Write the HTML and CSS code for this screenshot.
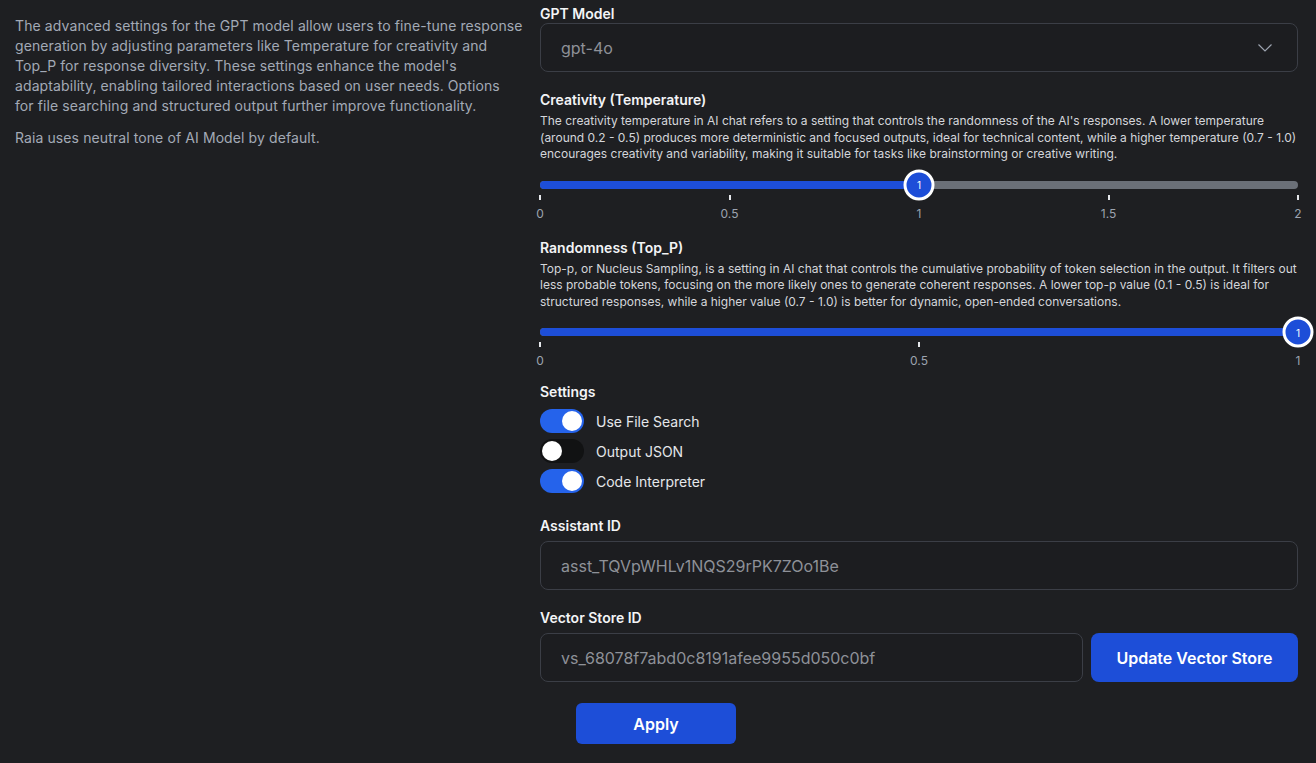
FILE: index.html
```html
<!DOCTYPE html>
<html lang="en">
<head>
<meta charset="utf-8">
<title>GPT Settings</title>
<link rel="stylesheet" href="styles.css">
</head>
<body>
<div class="page">
  <aside class="intro">
    <p>The advanced settings for the GPT model allow users to fine-tune response<br>generation by adjusting parameters like Temperature for creativity and<br>Top_P for response diversity. These settings enhance the model's<br>adaptability, enabling tailored interactions based on user needs. Options<br>for file searching and structured output further improve functionality.</p>
    <p class="second">Raia uses neutral tone of AI Model by default.</p>
  </aside>
  <main class="form">
    <div class="label first">GPT Model</div>
    <div class="select">
      <span>gpt-4o</span>
      <svg class="chev" width="16" height="10" viewBox="0 0 16 10"><path d="M1.5 1.5 L8 8 L14.5 1.5" fill="none" stroke="#9ca3af" stroke-width="1.2"/></svg>
    </div>

    <div class="label sec">Creativity (Temperature)</div>
    <p class="desc">The creativity temperature in AI chat refers to a setting that controls the randomness of the AI's responses. A lower temperature (around 0.2 - 0.5) produces more deterministic and focused outputs, ideal for technical content, while a higher temperature (0.7 - 1.0) encourages creativity and variability, making it suitable for tasks like brainstorming or creative writing.</p>
    <div class="slider">
      <div class="track"><div class="fill" style="width:50%"></div><div class="thumb" style="left:50%">1</div></div>
      <div class="ticks">
        <div class="tick" style="left:0%"><i></i><span>0</span></div>
        <div class="tick" style="left:25%"><i></i><span>0.5</span></div>
        <div class="tick" style="left:50%"><i></i><span>1</span></div>
        <div class="tick" style="left:75%"><i></i><span>1.5</span></div>
        <div class="tick" style="left:100%"><i></i><span>2</span></div>
      </div>
    </div>

    <div class="label sec two">Randomness (Top_P)</div>
    <p class="desc">Top-p, or Nucleus Sampling, is a setting in AI chat that controls the cumulative probability of token selection in the output. It filters out less probable tokens, focusing on the more likely ones to generate coherent responses. A lower top-p value (0.1 - 0.5) is ideal for structured responses, while a higher value (0.7 - 1.0) is better for dynamic, open-ended conversations.</p>
    <div class="slider">
      <div class="track"><div class="fill" style="width:100%"></div><div class="thumb" style="left:100%">1</div></div>
      <div class="ticks">
        <div class="tick" style="left:0%"><i></i><span>0</span></div>
        <div class="tick" style="left:50%"><i></i><span>0.5</span></div>
        <div class="tick" style="left:100%"><i></i><span>1</span></div>
      </div>
    </div>

    <div class="label settings">Settings</div>
    <div class="toggles">
      <div class="trow"><span class="toggle on"><b></b></span><span>Use File Search</span></div>
      <div class="trow"><span class="toggle"><b></b></span><span>Output JSON</span></div>
      <div class="trow"><span class="toggle on"><b></b></span><span>Code Interpreter</span></div>
    </div>

    <div class="label idl">Assistant ID</div>
    <div class="input">asst_TQVpWHLv1NQS29rPK7ZOo1Be</div>

    <div class="label vsl">Vector Store ID</div>
    <div class="vsrow">
      <div class="input grow">vs_68078f7abd0c8191afee9955d050c0bf</div>
      <button class="btn update">Update Vector Store</button>
    </div>

    <button class="btn apply">Apply</button>
  </main>
</div>
</body>
</html>
```

FILE: styles.css
```css
html, body {
  margin: 0;
  padding: 0;
  background: #1e1f22;
  font-family: Inter, "Noto Sans", sans-serif;
  color: #f3f4f6;
}
.page {
  display: flex;
  width: 1316px;
  height: 763px;
  overflow: hidden;
}
.intro {
  width: 530px;
  padding: 16px 0 0 15px;
  box-sizing: border-box;
  flex: none;
}
.intro p {
  margin: 0;
  font-size: 14px;
  line-height: 20px;
  letter-spacing: 0.1px;
  white-space: nowrap;
  color: #a3aab6;
}
.intro p.second {
  margin-top: 12px;
}
.form {
  width: 758px;
  margin-left: 10px;
  flex: none;
  display: flex;
  flex-direction: column;
}
.label {
  font-size: 14px;
  line-height: 18px;
  font-weight: 600;
  color: #f3f4f6;
}
.label.first { margin-top: 5px; }
.label.sec { margin-top: 19px; }
.label.sec.two { margin-top: 17px; }
.label.settings { margin-top: 14px; }
.label.idl { margin-top: 24px; }
.label.vsl { margin-top: 19px; }

.select, .input {
  height: 49px;
  box-sizing: border-box;
  border: 1px solid #3b3e46;
  border-radius: 8px;
  display: flex;
  align-items: center;
  padding: 0 20px;
  font-size: 16px;
  color: #8e9198;
  background: #1c1d20;
}
.select {
  justify-content: space-between;
  padding-right: 24px;
}
.input { margin-top: 6px; }
.desc {
  margin: 4px 0 0;
  font-size: 12px;
  line-height: 16.5px;
  color: #d4d6db;
}
.slider {
  margin-top: 14px;
}
.track {
  position: relative;
  height: 8px;
  margin: 4px 0;
  background: #6b7078;
  border-radius: 4px;
}
.fill {
  height: 100%;
  background: #1d4ed8;
  border-radius: 4px;
}
.thumb {
  position: absolute;
  top: 50%;
  width: 31px;
  height: 31px;
  box-sizing: border-box;
  transform: translate(-50%, -50%);
  border-radius: 50%;
  border: 3px solid #ffffff;
  background: #1d4ed8;
  color: #fff;
  font-size: 10px;
  display: flex;
  align-items: center;
  justify-content: center;
  z-index: 2;
}
.ticks {
  position: relative;
  height: 27px;
  margin-top: 6px;
}
.tick {
  position: absolute;
  top: 0;
  width: 0;
  display: flex;
  flex-direction: column;
  align-items: center;
}
.tick i {
  display: block;
  width: 2px;
  height: 5px;
  background: #e5e7eb;
  flex: none;
}
.tick span {
  margin-top: 6px;
  font-size: 12px;
  line-height: 16px;
  color: #9ca3af;
  white-space: nowrap;
}
.toggles {
  margin-top: 8px;
  display: flex;
  flex-direction: column;
  gap: 6px;
}
.trow {
  display: flex;
  align-items: center;
  gap: 12px;
  font-size: 14px;
  color: #e5e7eb;
  height: 24px;
}
.toggle {
  width: 44px;
  height: 24px;
  border-radius: 12px;
  background: #111213;
  display: flex;
  align-items: center;
  padding: 0 2px;
  box-sizing: border-box;
}
.toggle b {
  width: 20px;
  height: 20px;
  border-radius: 50%;
  background: #fff;
}
.toggle.on {
  background: #2563eb;
  justify-content: flex-end;
}
.vsrow {
  display: flex;
  gap: 8px;
  margin-top: 6px;
}
.vsrow .input { margin-top: 0; flex: 1; }
.btn {
  border: none;
  background: #1d4ed8;
  color: #fff;
  font-family: inherit;
  font-weight: 600;
  font-size: 16px;
  border-radius: 8px;
}
.update {
  width: 207px;
  height: 49px;
}
.apply {
  width: 160px;
  height: 41px;
  margin-top: 21px;
  margin-left: 36px;
  border-radius: 6px;
}
```
